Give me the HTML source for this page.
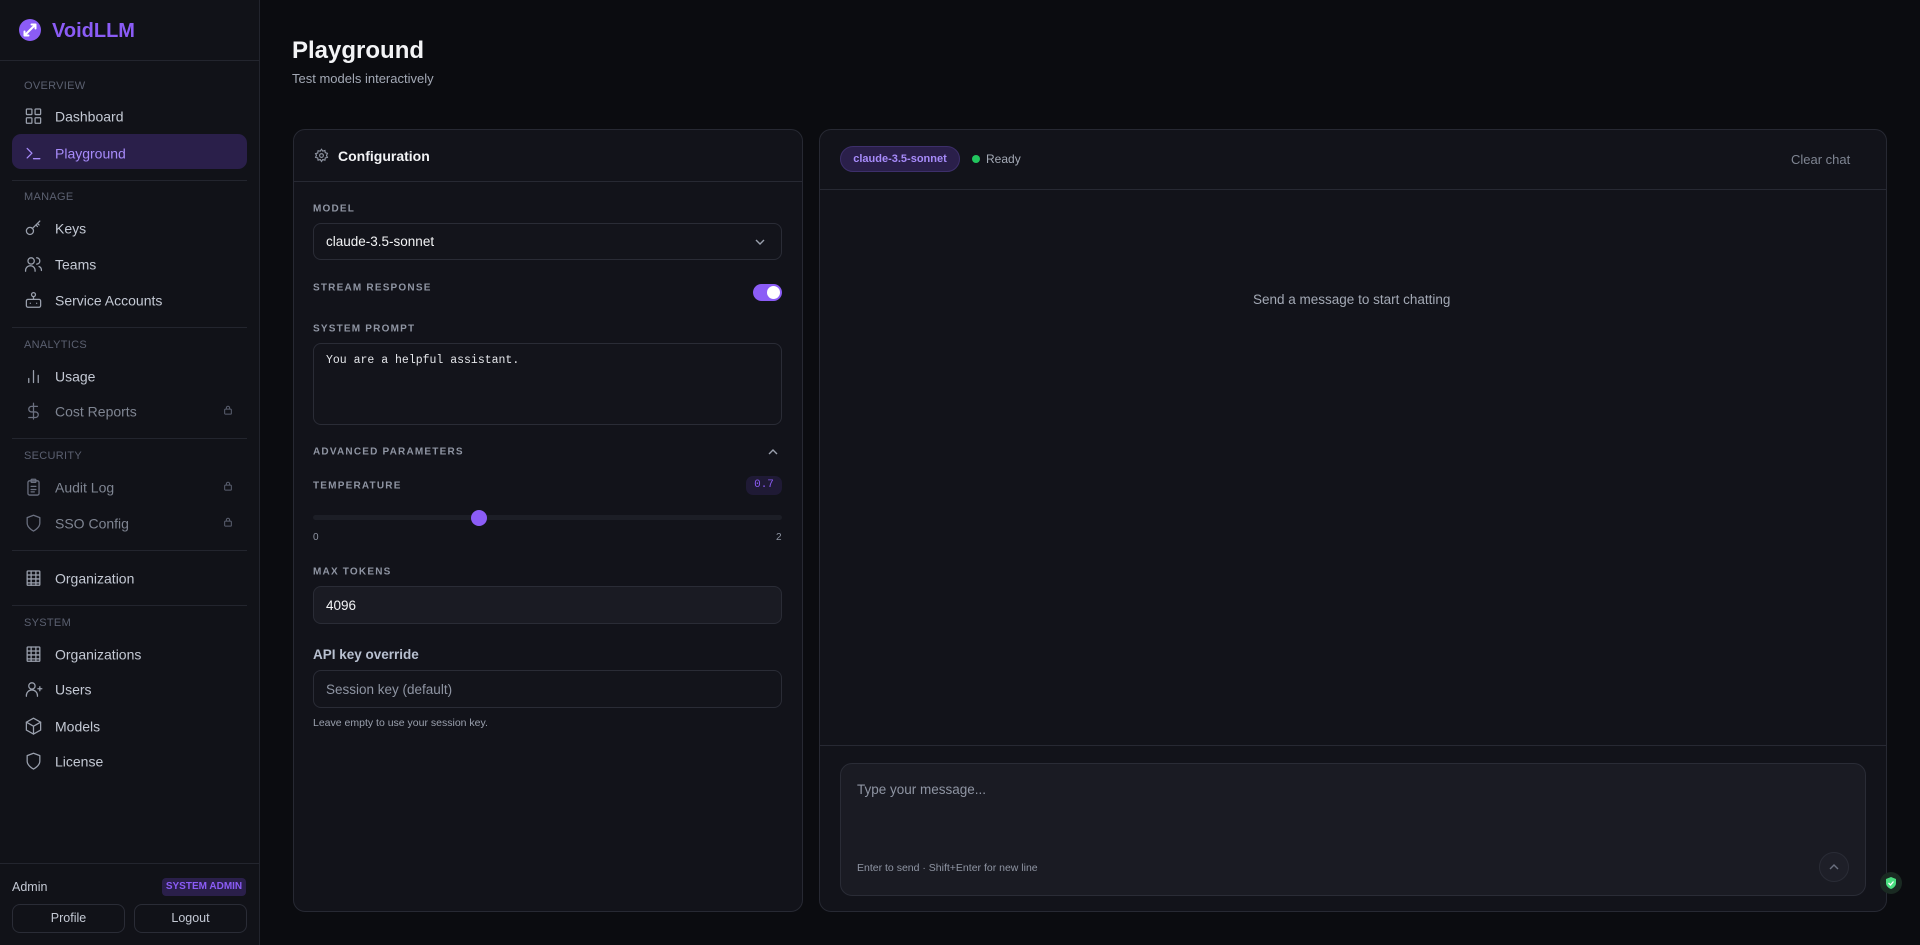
<!DOCTYPE html>
<html><head><meta charset="utf-8"><style>
*{box-sizing:border-box;margin:0;padding:0}
body{width:1920px;height:945px;background:#0b0c10;font-family:"Liberation Sans",sans-serif;color:#e5e7eb;position:relative;overflow:hidden}
.abs{position:absolute}
.sb{left:0;top:0;width:260px;height:945px;background:#111218;border-right:1px solid #22242d}
.hr{position:absolute;left:12px;width:235px;height:1px;background:#23252e}
.sec{position:absolute;left:24px;font-size:11px;color:#5b6070;letter-spacing:.3px;transform:translateY(-40%)}
.it{position:absolute;left:24px;font-size:14px;color:#c4c9d4;display:flex;align-items:center;transform:translateY(-44%)}
.it svg{width:19px;height:19px;margin-right:12px;stroke:#9aa0ad;fill:none;stroke-width:1.6;stroke-linecap:round;stroke-linejoin:round}
.dim{color:#7f8592}
.lock{position:absolute;left:223px;width:10px;height:10px;transform:translateY(-50%)}
.lbl{position:absolute;left:313px;font-size:10px;font-weight:bold;letter-spacing:1.2px;color:#8f95a3;transform:translateY(-50%)}
.inp{position:absolute;left:313px;width:469px;border:1px solid #2a2c36;border-radius:8px;background:#13141b}
.card{background:#12131a;border:1px solid #272933;border-radius:12px}
</style></head><body>
<div class="abs sb">
 <svg class="abs" style="left:18px;top:18px" width="24" height="24" viewBox="0 0 24 24"><circle cx="12" cy="12" r="11" fill="#8b5cf6"/><path d="M6.5 17.5L17.5 6.5M17.5 6.5h-4M17.5 6.5v4M6.5 17.5h4M6.5 17.5v-4" stroke="#fff" stroke-width="2" fill="none" stroke-linecap="round"/></svg>
 <div class="abs" style="left:52px;top:20px;font-size:20px;font-weight:bold;color:#8b5cf6">VoidLLM</div>
</div>
<div class="abs" style="left:0;top:60px;width:260px;height:1px;background:#23252e"></div>
<div class="sec" style="top:85px">OVERVIEW</div>
<div class="it" style="top:115px"><svg viewBox="0 0 24 24"><rect x="3" y="3" width="7" height="7" rx="1"/><rect x="14" y="3" width="7" height="7" rx="1"/><rect x="3" y="14" width="7" height="7" rx="1"/><rect x="14" y="14" width="7" height="7" rx="1"/></svg>Dashboard</div>
<div class="abs" style="left:12px;top:134px;width:235px;height:35px;border-radius:9px;background:#2a1f4a"></div>
<div class="it" style="top:152px;color:#a78bfa"><svg viewBox="0 0 24 24" style="stroke:#a78bfa"><path d="M4 6l6 6-6 6M12 19h8"/></svg>Playground</div>
<div class="hr" style="top:180px"></div>
<div class="sec" style="top:196px">MANAGE</div>
<div class="it" style="top:227px"><svg viewBox="0 0 24 24"><circle cx="7.5" cy="15.5" r="4.5"/><path d="M10.5 12.5L20 3M17 6l2 2M15 8l2 2"/></svg>Keys</div>
<div class="it" style="top:263px"><svg viewBox="0 0 24 24"><circle cx="9" cy="8" r="4"/><path d="M2 21v-1a6 6 0 0 1 12 0v1M16 4a4 4 0 0 1 0 8M19 15a5 5 0 0 1 3 5"/></svg>Teams</div>
<div class="it" style="top:299px"><svg viewBox="0 0 24 24"><circle cx="12" cy="5" r="2.5"/><rect x="3" y="11" width="18" height="10" rx="2"/><path d="M12 8v3M8 16h.01M16 16h.01"/></svg>Service Accounts</div>
<div class="hr" style="top:327px"></div>
<div class="sec" style="top:344px">ANALYTICS</div>
<div class="it" style="top:375px"><svg viewBox="0 0 24 24"><path d="M6 20v-5M12 20V5M18 20v-9"/></svg>Usage</div>
<div class="it dim" style="top:410px"><svg viewBox="0 0 24 24" style="stroke:#6b7080"><path d="M12 2v20M17 6H9.5a3.5 3.5 0 0 0 0 7h5a3.5 3.5 0 0 1 0 7H6"/></svg>Cost Reports</div>
<svg class="lock" style="top:410px" viewBox="0 0 12 12" fill="none" stroke="#5b6070" stroke-width="1.2"><rect x="2" y="5" width="8" height="6" rx="1"/><path d="M4 5V3.5a2 2 0 0 1 4 0V5"/></svg>
<div class="hr" style="top:438px"></div>
<div class="sec" style="top:455px">SECURITY</div>
<div class="it dim" style="top:486px"><svg viewBox="0 0 24 24" style="stroke:#6b7080"><rect x="5" y="4" width="14" height="18" rx="2"/><rect x="9" y="2" width="6" height="4" rx="1"/><path d="M9 11h6M9 15h6M9 18h4"/></svg>Audit Log</div>
<svg class="lock" style="top:486px" viewBox="0 0 12 12" fill="none" stroke="#5b6070" stroke-width="1.2"><rect x="2" y="5" width="8" height="6" rx="1"/><path d="M4 5V3.5a2 2 0 0 1 4 0V5"/></svg>
<div class="it dim" style="top:522px"><svg viewBox="0 0 24 24" style="stroke:#6b7080"><path d="M12 22s8-4 8-10V5l-8-3-8 3v7c0 6 8 10 8 10z"/></svg>SSO Config</div>
<svg class="lock" style="top:522px" viewBox="0 0 12 12" fill="none" stroke="#5b6070" stroke-width="1.2"><rect x="2" y="5" width="8" height="6" rx="1"/><path d="M4 5V3.5a2 2 0 0 1 4 0V5"/></svg>
<div class="hr" style="top:550px"></div>
<div class="it" style="top:577px"><svg viewBox="0 0 24 24"><rect x="4" y="3" width="16" height="18" rx="1"/><path d="M4 8h16M4 13h16M4 18h16M9 3v18M15 3v18"/></svg>Organization</div>
<div class="hr" style="top:605px"></div>
<div class="sec" style="top:622px">SYSTEM</div>
<div class="it" style="top:653px"><svg viewBox="0 0 24 24"><rect x="4" y="3" width="16" height="18" rx="1"/><path d="M4 8h16M4 13h16M4 18h16M9 3v18M15 3v18"/></svg>Organizations</div>
<div class="it" style="top:688px"><svg viewBox="0 0 24 24"><circle cx="10" cy="8" r="4"/><path d="M3 21v-1a7 7 0 0 1 14 0v1M20 9v5M17.5 11.5h5"/></svg>Users</div>
<div class="it" style="top:725px"><svg viewBox="0 0 24 24"><path d="M12 2l9 5v10l-9 5-9-5V7z"/><path d="M3 7l9 5 9-5M12 12v10"/></svg>Models</div>
<div class="it" style="top:760px"><svg viewBox="0 0 24 24"><path d="M12 22s8-4 8-10V5l-8-3-8 3v7c0 6 8 10 8 10z"/></svg>License</div>
<div class="abs" style="left:0;top:863px;width:260px;height:1px;background:#23252e"></div>
<div class="abs" style="left:12px;top:880px;font-size:12.5px;color:#c4c9d4">Admin</div>
<div class="abs" style="left:162px;top:878px;width:84px;height:18px;background:#2a1f4a;border-radius:4px;color:#8b5cf6;font-size:10px;font-weight:bold;text-align:center;line-height:18px">SYSTEM ADMIN</div>
<div class="abs" style="left:12px;top:904px;width:113px;height:29px;border:1px solid #2a2c36;border-radius:8px;font-size:12.5px;color:#c4c9d4;text-align:center;line-height:27px">Profile</div>
<div class="abs" style="left:134px;top:904px;width:113px;height:29px;border:1px solid #2a2c36;border-radius:8px;font-size:12.5px;color:#c4c9d4;text-align:center;line-height:27px">Logout</div>

<div class="abs" style="left:292px;top:37px;font-size:24px;font-weight:bold;color:#f3f4f6">Playground</div>
<div class="abs" style="left:292px;top:71px;font-size:13px;color:#a3a9b5">Test models interactively</div>

<div class="abs card" style="left:293px;top:129px;width:510px;height:783px"></div>
<div class="abs" style="left:294px;top:181px;width:508px;height:1px;background:#272933"></div>
<svg class="abs" style="left:314px;top:148px" width="15" height="15" viewBox="0 0 24 24" fill="none" stroke="#8f95a3" stroke-width="1.8"><circle cx="12" cy="12" r="3"/><path d="M12 2l2 3 3.5-1 .5 3.5 3.5 1-1.5 3.5 1.5 3-3.5 1-.5 3.5-3.5-1-2 3-2-3-3.5 1-.5-3.5-3.5-1 1.5-3.5L2.5 9l3.5-1L6.5 4.5 10 5z"/></svg>
<div class="abs" style="left:338px;top:148px;font-size:14px;font-weight:bold;color:#f3f4f6">Configuration</div>
<div class="lbl" style="top:209px">MODEL</div>
<div class="inp" style="top:223px;height:37px"></div>
<div class="abs" style="left:326px;top:234px;font-size:13.5px;color:#f3f4f6">claude-3.5-sonnet</div>
<svg class="abs" style="left:754px;top:236px" width="12" height="12" viewBox="0 0 12 12" fill="none" stroke="#9aa0ad" stroke-width="1.4"><path d="M2 4l4 4 4-4"/></svg>
<div class="lbl" style="top:288px">STREAM RESPONSE</div>
<div class="abs" style="left:753px;top:284px;width:29px;height:17px;border-radius:9px;background:#8b5cf6"></div>
<div class="abs" style="left:767px;top:286px;width:13px;height:13px;border-radius:50%;background:#fff"></div>
<div class="lbl" style="top:329px">SYSTEM PROMPT</div>
<div class="inp" style="top:343px;height:82px"></div>
<div class="abs" style="left:326px;top:354px;font-family:'Liberation Mono',monospace;font-size:11.5px;color:#e5e7eb">You are a helpful assistant.</div>
<div class="lbl" style="top:452px">ADVANCED PARAMETERS</div>
<svg class="abs" style="left:767px;top:446px" width="12" height="12" viewBox="0 0 12 12" fill="none" stroke="#9aa0ad" stroke-width="1.4"><path d="M2 8l4-4 4 4"/></svg>
<div class="lbl" style="top:486px">TEMPERATURE</div>
<div class="abs" style="left:746px;top:476px;width:36px;height:19px;border-radius:7px;background:#1f1a35;color:#8b5cf6;font-family:'Liberation Mono',monospace;font-size:11px;text-align:center;line-height:19px">0.7</div>
<div class="abs" style="left:313px;top:515px;width:469px;height:5px;border-radius:3px;background:#1c1e26"></div>
<div class="abs" style="left:471px;top:510px;width:16px;height:16px;border-radius:50%;background:#8b5cf6"></div>
<div class="abs" style="left:313px;top:532px;font-size:10px;color:#8f95a3">0</div>
<div class="abs" style="left:776px;top:532px;font-size:10px;color:#8f95a3">2</div>
<div class="lbl" style="top:572px">MAX TOKENS</div>
<div class="inp" style="top:586px;height:38px;background:#1a1b23"></div>
<div class="abs" style="left:326px;top:598px;font-size:13.5px;color:#f3f4f6">4096</div>
<div class="abs" style="left:313px;top:647px;font-size:13.5px;font-weight:bold;color:#b8c0d0">API key override</div>
<div class="inp" style="top:670px;height:38px"></div>
<div class="abs" style="left:326px;top:682px;font-size:13.5px;color:#8f95a3">Session key (default)</div>
<div class="abs" style="left:313px;top:717px;font-size:10.5px;color:#9aa0ad">Leave empty to use your session key.</div>

<div class="abs card" style="left:819px;top:129px;width:1068px;height:783px"></div>
<div class="abs" style="left:820px;top:189px;width:1066px;height:1px;background:#272933"></div>
<div class="abs" style="left:840px;top:146px;width:120px;height:26px;border-radius:13px;background:#2a1f4a;border:1px solid #3d2f6b;color:#a78bfa;font-size:11px;font-weight:bold;text-align:center;line-height:24px">claude-3.5-sonnet</div>
<div class="abs" style="left:972px;top:155px;width:8px;height:8px;border-radius:50%;background:#22c55e"></div>
<div class="abs" style="left:986px;top:152px;font-size:12px;color:#a3a9b5">Ready</div>
<div class="abs" style="left:1791px;top:152px;font-size:13px;color:#7f8592">Clear chat</div>
<div class="abs" style="left:1253px;top:292px;font-size:13.5px;color:#a3a9b5">Send a message to start chatting</div>
<div class="abs" style="left:820px;top:745px;width:1066px;height:1px;background:#272933"></div>
<div class="abs" style="left:840px;top:763px;width:1026px;height:133px;border-radius:12px;background:#1a1b23;border:1px solid #2a2c36"></div>
<div class="abs" style="left:857px;top:782px;font-size:13.5px;color:#8f95a3">Type your message...</div>
<div class="abs" style="left:857px;top:862px;font-size:10.5px;color:#8f95a3">Enter to send · Shift+Enter for new line</div>
<div class="abs" style="left:1819px;top:852px;width:30px;height:30px;border-radius:50%;background:#1e1f28;border:1px solid #2a2c36"></div>
<svg class="abs" style="left:1828px;top:861px" width="12" height="12" viewBox="0 0 12 12" fill="none" stroke="#6b7080" stroke-width="1.4"><path d="M2 8l4-4 4 4"/></svg>
<div class="abs" style="left:1880px;top:872px;width:22px;height:22px;border-radius:50%;background:#1a2a22"></div>
<svg class="abs" style="left:1885px;top:876px" width="12" height="14" viewBox="0 0 12 14"><path d="M6 1l5 2v4c0 3-2.5 5-5 6-2.5-1-5-3-5-6V3z" fill="#4ade80"/><path d="M3.5 7l2 2 3-3.5" stroke="#fff" stroke-width="1.3" fill="none"/></svg>
</body></html>
